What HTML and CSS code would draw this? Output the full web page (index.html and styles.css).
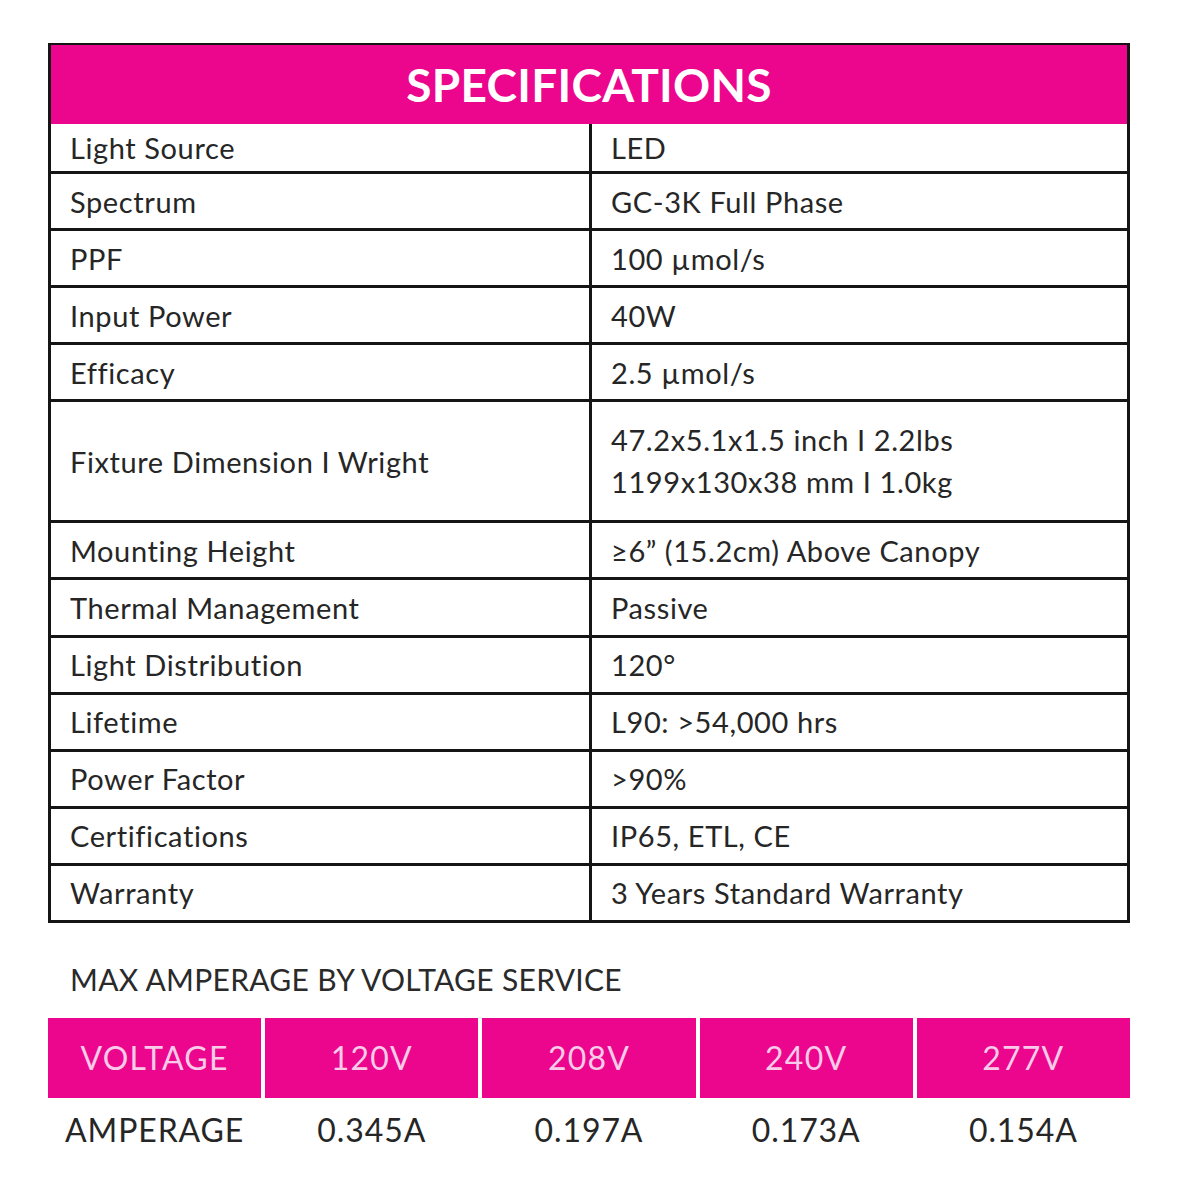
FILE: index.html
```html
<!DOCTYPE html>
<html>
<head>
<meta charset="utf-8">
<link rel="stylesheet" href="styles.css">
</head>
<body>
<div class="page">
  <div class="specs">
    <div class="specs-title">SPECIFICATIONS</div>
    <div class="cell label first">Light Source</div><div class="cell value first">LED</div>
    <div class="cell label">Spectrum</div><div class="cell value">GC-3K Full Phase</div>
    <div class="cell label">PPF</div><div class="cell value">100 µmol/s</div>
    <div class="cell label">Input Power</div><div class="cell value">40W</div>
    <div class="cell label">Efficacy</div><div class="cell value">2.5 µmol/s</div>
    <div class="cell label tall">Fixture Dimension I Wright</div><div class="cell value tall"><div class="two">47.2x5.1x1.5 inch I 2.2lbs<br>1199x130x38 mm I 1.0kg</div></div>
    <div class="cell label">Mounting Height</div><div class="cell value">≥6” (15.2cm) Above Canopy</div>
    <div class="cell label">Thermal Management</div><div class="cell value">Passive</div>
    <div class="cell label">Light Distribution</div><div class="cell value">120°</div>
    <div class="cell label">Lifetime</div><div class="cell value">L90: &gt;54,000 hrs</div>
    <div class="cell label">Power Factor</div><div class="cell value">&gt;90%</div>
    <div class="cell label">Certifications</div><div class="cell value">IP65, ETL, CE</div>
    <div class="cell label last">Warranty</div><div class="cell value last">3 Years Standard Warranty</div>
  </div>

  <div class="amp-title">MAX AMPERAGE BY VOLTAGE SERVICE</div>
  <div class="amp">
    <div class="vh">VOLTAGE</div>
    <div class="vh">120V</div>
    <div class="vh">208V</div>
    <div class="vh">240V</div>
    <div class="vh">277V</div>
    <div class="av">AMPERAGE</div>
    <div class="av">0.345A</div>
    <div class="av">0.197A</div>
    <div class="av">0.173A</div>
    <div class="av">0.154A</div>
  </div>
</div>
</body>
</html>
```

FILE: styles.css
```css
html, body {
  margin: 0;
  padding: 0;
  background: #ffffff;
}
body {
  font-family: "Lato", "Liberation Sans", sans-serif;
  color: #262626;
}
.page {
  padding: 43px 70px 0 48px;
  width: 1082px;
}
.specs {
  display: grid;
  grid-template-columns: 541px 1fr;
  border: 3px solid #151515;
  border-top-width: 2px;
}
.specs-title {
  grid-column: 1 / 3;
  background: #ec058d;
  color: #ffffff;
  font-weight: 700;
  font-size: 46px;
  letter-spacing: 0.3px;
  height: 79px;
  display: flex;
  align-items: center;
  justify-content: center;
}
.cell {
  height: 54.1px;
  display: flex;
  align-items: center;
  padding-left: 19px;
  font-size: 29px;
  letter-spacing: 0.6px;
  border-bottom: 3px solid #151515;
}
.cell.first {
  height: 47px;
}
.cell.tall {
  height: 118px;
}
.cell.last {
  height: 54px;
  border-bottom: none;
}
.label {
  border-right: 3px solid #151515;
}
.value {
  padding-left: 19px;
}
.two {
  line-height: 42px;
}
.amp-title {
  margin-top: 38px;
  padding-left: 22px;
  font-size: 30px;
  letter-spacing: 0.3px;
  color: #2a2a2a;
  height: 36px;
  line-height: 36px;
}
.amp {
  margin-top: 21px;
  display: grid;
  grid-template-columns: repeat(5, 1fr);
  column-gap: 4px;
}
.vh {
  background: #ec058d;
  color: #f9cbe8;
  font-size: 32px;
  letter-spacing: 1.2px;
  height: 80px;
  display: flex;
  align-items: center;
  justify-content: center;
}
.av {
  font-size: 32px;
  letter-spacing: 0.9px;
  color: #262626;
  height: 64px;
  display: flex;
  align-items: center;
  justify-content: center;
}
```
